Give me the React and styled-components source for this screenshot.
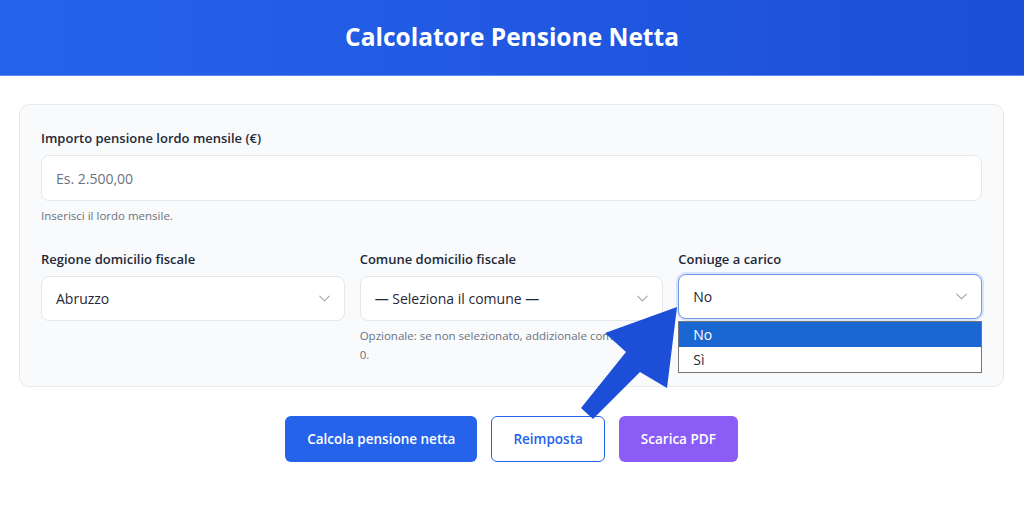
import React from 'react';
import styled, { createGlobalStyle } from 'styled-components';
import { ChevronDown } from 'lucide-react';

const GlobalStyle = createGlobalStyle`
  * { box-sizing: border-box; }
  body {
    margin: 0;
    background: #ffffff;
    font-family: "Open Sans", "Noto Sans", Arial, sans-serif;
    color: #1f2937;
  }
`;

const Page = styled.div`
  position: relative;
  width: 1024px;
  min-height: 505px;
  overflow: hidden;
`;

const Header = styled.header`
  height: 76px;
  display: flex;
  align-items: center;
  justify-content: center;
  background: linear-gradient(90deg, #2563eb 0%, #1d4ed8 100%);
  border-bottom: 1px solid #5b8def;
`;

const Title = styled.h1`
  margin: 0 0 2px;
  color: #ffffff;
  font-size: 24.5px;
  font-weight: 700;
  letter-spacing: 0;
`;

const Main = styled.main`
  padding: 28px 20px 0 19px;
`;

const Card = styled.section`
  background: #f8fafc;
  border: 1px solid #e6e9ee;
  border-radius: 10px;
  padding: 24px 21px 22px;
`;

const Label = styled.label`
  display: block;
  font-size: 13px;
  font-weight: 600;
  line-height: 18px;
  color: #1f2937;
  margin-bottom: 8px;
`;

const TextInput = styled.input`
  display: block;
  width: 100%;
  height: 46px;
  padding: 0 14px;
  border: 1px solid #e5e7eb;
  border-radius: 8px;
  background: #ffffff;
  font-family: inherit;
  font-size: 14px;
  color: #1f2937;
  outline: none;

  &::placeholder {
    color: #6b7280;
  }
`;

const Hint = styled.p`
  margin: 5px 0 0;
  font-size: 11.5px;
  line-height: 19px;
  color: #6b7280;
`;

const Row = styled.div`
  display: grid;
  grid-template-columns: repeat(3, 1fr);
  gap: 15px;
  margin-top: 25px;
`;

const Field = styled.div`
  position: relative;
`;

const SelectBox = styled.div`
  display: flex;
  align-items: center;
  justify-content: space-between;
  height: 45px;
  padding: 0 10px 0 14px;
  background: #ffffff;
  border: 1px solid ${(p) => (p.$focused ? '#6f98e6' : '#e5e7eb')};
  border-radius: 8px;
  box-shadow: ${(p) => (p.$focused ? '0 0 0 2px rgba(37, 99, 235, 0.15)' : 'none')};
  font-size: 14px;
  color: #1f2937;
  margin-top: ${(p) => (p.$focused ? '-2px' : '0')};
`;

const Menu = styled.ul`
  position: absolute;
  left: 0;
  right: 0;
  top: 71px;
  margin: 0;
  padding: 0;
  list-style: none;
  background: #ffffff;
  border: 1px solid #767676;
  z-index: 2;
`;

const Option = styled.li`
  height: 25px;
  padding: 0 14px;
  display: flex;
  align-items: center;
  font-size: 14px;
  background: ${(p) => (p.$active ? '#1a67d2' : '#ffffff')};
  color: ${(p) => (p.$active ? '#ffffff' : '#1f2937')};
`;

const Actions = styled.div`
  display: flex;
  justify-content: center;
  gap: 14px;
  margin-top: 29px;
`;

const Button = styled.button`
  height: 46px;
  padding: 0 21px;
  border-radius: 6px;
  font-family: inherit;
  font-size: 13.5px;
  font-weight: 600;
  cursor: pointer;
  border: 1px solid ${(p) => (p.$variant === 'outline' ? '#2563eb' : 'transparent')};
  background: ${(p) =>
    p.$variant === 'outline' ? '#ffffff' : p.$variant === 'purple' ? '#8b5cf6' : '#2563eb'};
  color: ${(p) => (p.$variant === 'outline' ? '#2563eb' : '#ffffff')};
`;

const Overlay = styled.svg`
  position: absolute;
  left: 0;
  top: 0;
  pointer-events: none;
  z-index: 5;
`;

const Chevron = () => <ChevronDown size={19} strokeWidth={1.3} color="#9ca3af" />;

export default function App() {
  return (
    <Page>
      <GlobalStyle />
      <Header>
        <Title>Calcolatore Pensione Netta</Title>
      </Header>
      <Main>
        <Card>
          <Label>Importo pensione lordo mensile (€)</Label>
          <TextInput placeholder="Es. 2.500,00" />
          <Hint>Inserisci il lordo mensile.</Hint>
          <Row>
            <Field>
              <Label>Regione domicilio fiscale</Label>
              <SelectBox>
                Abruzzo
                <Chevron />
              </SelectBox>
            </Field>
            <Field>
              <Label>Comune domicilio fiscale</Label>
              <SelectBox>
                — Seleziona il comune —
                <Chevron />
              </SelectBox>
              <Hint>Opzionale: se non selezionato, addizionale comunale = 0.</Hint>
            </Field>
            <Field>
              <Label>Coniuge a carico</Label>
              <SelectBox $focused>
                No
                <Chevron />
              </SelectBox>
              <Menu>
                <Option $active>No</Option>
                <Option>Sì</Option>
              </Menu>
            </Field>
          </Row>
        </Card>
        <Actions>
          <Button>Calcola pensione netta</Button>
          <Button $variant="outline">Reimposta</Button>
          <Button $variant="purple">Scarica PDF</Button>
        </Actions>
      </Main>
      <Overlay width="1024" height="505" viewBox="0 0 1024 505">
        <polygon
          points="677,307 605,333 626,352 581,408 593,419 640,372 667,388"
          fill="#1d4ed8"
        />
      </Overlay>
    </Page>
  );
}
